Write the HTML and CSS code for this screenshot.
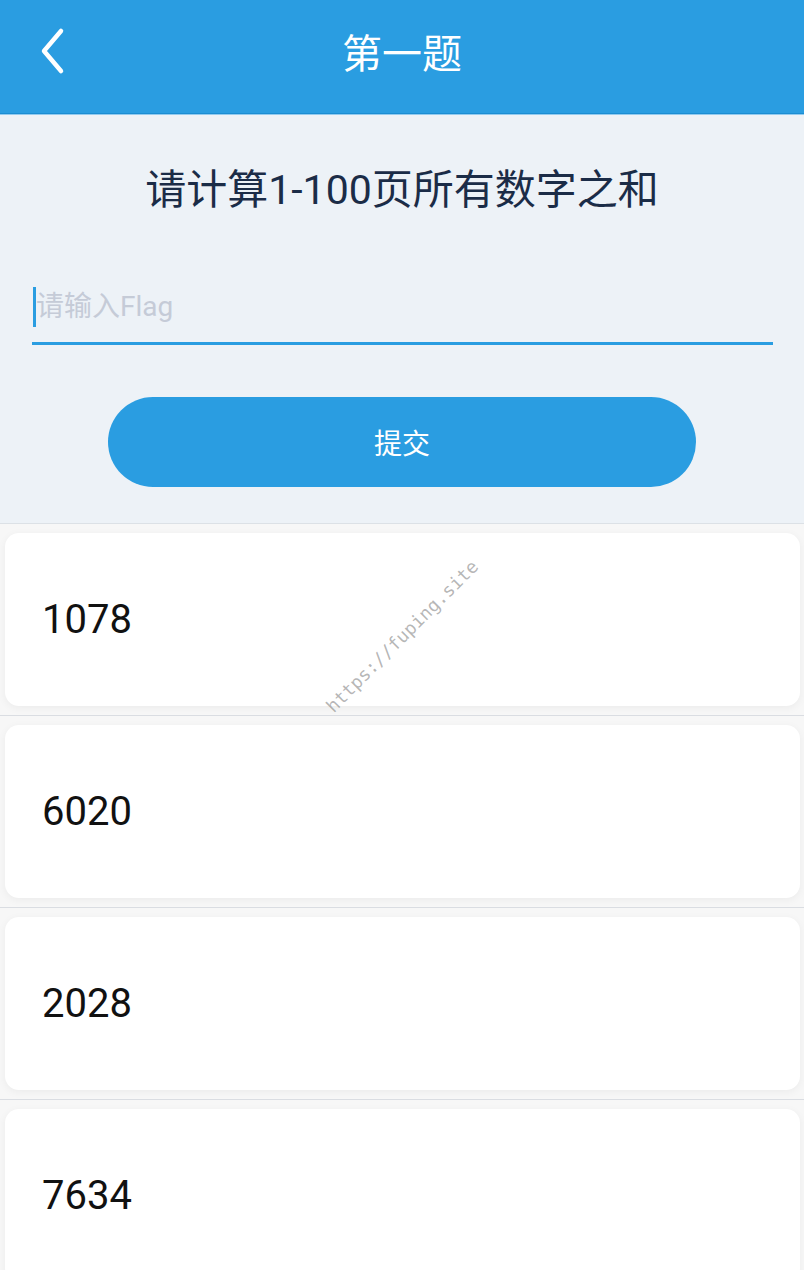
FILE: index.html
```html
<!DOCTYPE html>
<html lang="zh-CN">
<head>
<meta charset="utf-8">
<title>第一题</title>
<link rel="stylesheet" href="styles.css">
</head>
<body>
<div class="page">
  <header class="topbar">
    <div class="back">
      <svg width="30" height="48" viewBox="0 0 30 48" aria-hidden="true">
        <path d="M23 4 L6 24 L23 44" fill="none" stroke="#ffffff" stroke-width="4.5" stroke-linecap="round" stroke-linejoin="round"/>
      </svg>
    </div>
    <div class="title">第一题</div>
    <div class="spacer"></div>
  </header>

  <section class="question">
    <h1 class="q-title">请计算1-100页所有数字之和</h1>
    <div class="field">
      <span class="caret"></span>
      <span class="placeholder">请输入Flag</span>
    </div>
    <div class="submit">提交</div>
  </section>

  <ul class="options">
    <li class="row"><div class="card">1078</div></li>
    <li class="row"><div class="card">6020</div></li>
    <li class="row"><div class="card">2028</div></li>
    <li class="row"><div class="card">7634</div></li>
  </ul>

  <span class="watermark">https://fuping.site</span>
</div>
</body>
</html>
```

FILE: styles.css
```css
html, body {
  margin: 0;
  padding: 0;
  background: #f7f7f7;
}

body {
  font-family: Roboto, "Noto Sans CJK SC", "Noto Sans", sans-serif;
  overflow: hidden;
}

.page {
  position: relative;
  width: 804px;
  height: 1270px;
  overflow: hidden;
}

.topbar {
  height: 101px;
  padding-bottom: 12px;
  background: #2a9de1;
  border-bottom: 1px solid #1c8dd2;
  box-shadow: 0 1px 0 #93cbef;
  display: grid;
  grid-template-columns: 1fr auto 1fr;
  align-items: center;
  position: relative;
  z-index: 1;
}

.back {
  padding-left: 38px;
  display: flex;
  align-items: center;
}

.back svg {
  display: block;
}

.title {
  color: #ffffff;
  font-size: 40px;
  font-family: "Noto Sans CJK SC", sans-serif;
  line-height: 50px;
}

.question {
  background: #edf2f7;
  padding: 49px 0 36px;
  border-bottom: 1px solid #dce1e6;
}

.q-title {
  margin: 0;
  height: 54px;
  line-height: 54px;
  text-align: center;
  font-size: 41px;
  font-weight: 400;
  color: #1b2c47;
  font-family: Roboto, "Noto Sans CJK SC", sans-serif;
}

.field {
  margin: 55px 31px 0 32px;
  height: 70px;
  border-bottom: 3px solid #2a9de1;
  display: flex;
  align-items: center;
}

.caret {
  width: 3px;
  height: 40px;
  margin-left: 1px;
  background: #2a9de1;
}

.placeholder {
  font-size: 28px;
  color: #c5cbd7;
  font-family: Roboto, "Noto Sans CJK SC", sans-serif;
  line-height: 40px;
}

.submit {
  width: 588px;
  height: 90px;
  margin: 52px auto 0;
  border-radius: 45px;
  background: #2a9de1;
  color: #ffffff;
  font-size: 28px;
  font-family: "Noto Sans CJK SC", sans-serif;
  display: flex;
  align-items: center;
  justify-content: center;
}

.options {
  list-style: none;
  margin: 0;
  padding: 0;
}

.row {
  padding: 9px 4px 9px 5px;
  background: #f7f7f7;
  border-bottom: 1px solid #dadde2;
}

.card {
  height: 173px;
  background: #ffffff;
  border-radius: 14px;
  box-shadow: 0 2px 8px rgba(0, 0, 0, 0.05);
  display: flex;
  align-items: center;
  padding-left: 37px;
  font-size: 40px;
  color: #111111;
  font-family: Roboto, sans-serif;
}

.watermark {
  position: absolute;
  left: 402px;
  top: 636px;
  transform: translate(-50%, -50%) rotate(-45deg);
  font-family: "DejaVu Sans Mono", "Liberation Mono", monospace;
  font-size: 18px;
  color: rgba(120, 120, 120, 0.55);
  white-space: nowrap;
  pointer-events: none;
}
```
